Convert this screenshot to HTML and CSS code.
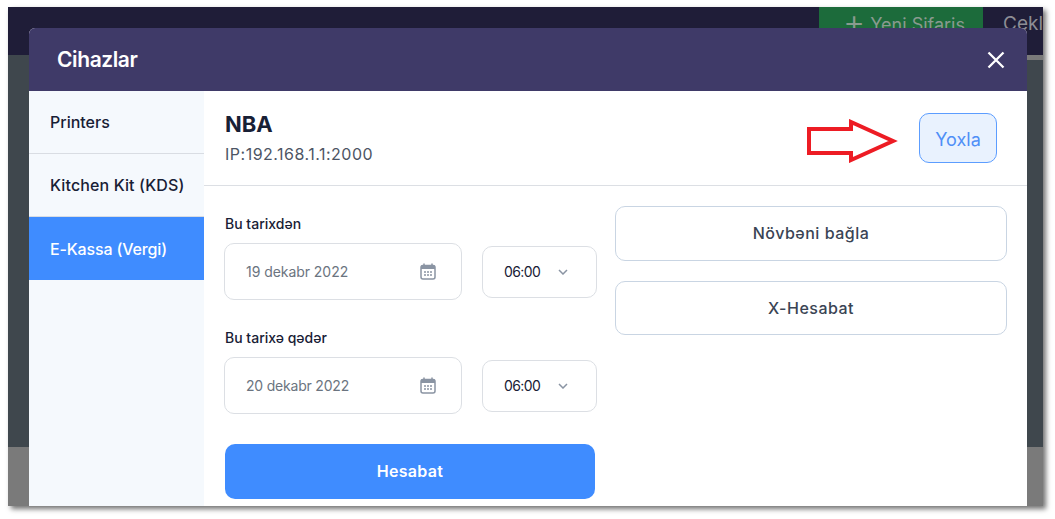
FILE: index.html
```html
<!DOCTYPE html>
<html lang="en">
<head>
    <meta charset="UTF-8">
    <title>Cihazlar</title>
    <link rel="stylesheet" href="styles.css">
</head>
<body>
    <div class="screen">
        <div class="topBar">
            <div class="newOrder"><span class="plus">+</span> Yeni Sifariş</div>
            <div class="pending">Çekla</div>
        </div>
        <div class="pageBody"></div>
        <div class="pageFoot"></div>
        <div class="pageStrip"></div>

        <div class="modal">
            <div class="modalHead">
                <h2>Cihazlar</h2>
                <svg class="closeIcon" width="20" height="20" viewBox="0 0 20 20">
                    <path d="M2.5 2.5L17.5 17.5M17.5 2.5L2.5 17.5" stroke="#fff" stroke-width="2.3" fill="none"/>
                </svg>
            </div>
            <div class="modalBody">
                <div class="sideMenu">
                    <div class="sideItem">Printers</div>
                    <div class="sideItem wideItem">Kitchen Kit (KDS)</div>
                    <div class="sideItem active">E-Kassa (Vergi)</div>
                </div>
                <div class="content">
                    <div class="deviceRow">
                        <div class="deviceInfo">
                            <div class="deviceName">NBA</div>
                            <div class="deviceIp">IP:192.168.1.1:2000</div>
                        </div>
                        <button class="checkBtn">Yoxla</button>
                    </div>
                    <div class="formArea">
                        <div class="dateCol">
                            <label class="fieldLabel">Bu tarixdən</label>
                            <div class="fieldRow">
                                <div class="dateInput">
                                    <span>19 dekabr 2022</span>
                                    <svg class="calIcon" width="16" height="17" viewBox="0 0 16 17">
                                        <path d="M4 .5v3M12 .5v3" stroke="#8a94a3" stroke-width="1.5"/>
                                        <rect x="1" y="2.5" width="14" height="13.5" rx="2" fill="none" stroke="#8a94a3" stroke-width="1.5"/>
                                        <rect x="1" y="2.5" width="14" height="3.5" fill="#8a94a3"/>
                                        <path d="M4 9h2M7 9h2M10 9h2M4 12h2M7 12h2M10 12h2" stroke="#8a94a3" stroke-width="1.4"/>
                                    </svg>
                                </div>
                                <div class="timeSelect">
                                    <span>06:00</span>
                                    <svg width="10" height="6" viewBox="0 0 10 6"><path d="M1 1l4 4 4-4" stroke="#8a94a3" stroke-width="1.5" fill="none"/></svg>
                                </div>
                            </div>
                            <label class="fieldLabel second">Bu tarixə qədər</label>
                            <div class="fieldRow">
                                <div class="dateInput">
                                    <span class="tightDate">20 dekabr 2022</span>
                                    <svg class="calIcon" width="16" height="17" viewBox="0 0 16 17">
                                        <path d="M4 .5v3M12 .5v3" stroke="#8a94a3" stroke-width="1.5"/>
                                        <rect x="1" y="2.5" width="14" height="13.5" rx="2" fill="none" stroke="#8a94a3" stroke-width="1.5"/>
                                        <rect x="1" y="2.5" width="14" height="3.5" fill="#8a94a3"/>
                                        <path d="M4 9h2M7 9h2M10 9h2M4 12h2M7 12h2M10 12h2" stroke="#8a94a3" stroke-width="1.4"/>
                                    </svg>
                                </div>
                                <div class="timeSelect">
                                    <span>06:00</span>
                                    <svg width="10" height="6" viewBox="0 0 10 6"><path d="M1 1l4 4 4-4" stroke="#8a94a3" stroke-width="1.5" fill="none"/></svg>
                                </div>
                            </div>
                            <button class="reportBtn">Hesabat</button>
                        </div>
                        <div class="actionCol">
                            <button class="actionBtn">Növbəni bağla</button>
                            <button class="actionBtn">X-Hesabat</button>
                        </div>
                    </div>
                </div>
            </div>
        </div>

        <!-- red arrow drawn over the screenshot -->
        <svg class="arrow" width="94" height="44" viewBox="0 0 94 44">
            <path d="M3 10H45V3L87 22L45 41V34H3Z" fill="#fff" stroke="#ed1c24" stroke-width="4"/>
        </svg>
    </div>
</body>
</html>
```

FILE: styles.css
```css
* {
    margin: 0;
    padding: 0;
    box-sizing: border-box;
    font-family: 'Inter', 'Noto Sans', sans-serif;
}

body {
    background-color: #fff;
    height: 519px;
    overflow: hidden;
}

.screen {
    position: relative;
    width: 1035px;
    height: 499px;
    margin: 7px 0 0 8px;
    display: flex;
    flex-direction: column;
    box-shadow: 3px 3px 5px rgba(0, 0, 0, 0.55);
}

.topBar {
    height: 48px;
    background-color: #1f1d38;
    display: flex;
    padding-left: 811px;
    overflow: hidden;
}

.newOrder {
    width: 164px;
    height: 48px;
    flex-shrink: 0;
    background-color: #1c6b3b;
    color: #8a9a90;
    font-size: 18px;
    padding: 5px 0 0 24px;
    white-space: nowrap;
}

.plus {
    font-size: 34px;
    font-weight: 300;
    line-height: 20px;
    vertical-align: -3px;
}

.pending {
    color: #8d8d95;
    font-size: 19px;
    padding: 5px 0 0 20px;
}

.pageBody {
    height: 392px;
    background-color: #3f474d;
}

.pageFoot {
    flex: 1;
    background-color: #7a7a7a;
}

.pageStrip {
    position: absolute;
    right: 0;
    top: 48px;
    width: 20px;
    height: 5px;
    background-color: #7a7a7a;
}

.modal {
    position: absolute;
    left: 21px;
    top: 21px;
    width: 998px;
    height: 478px;
    background-color: #fff;
    border-radius: 6px 6px 0 0;
    overflow: hidden;
    display: flex;
    flex-direction: column;
}

.modalHead {
    height: 63px;
    background-color: #3f3a68;
    color: #fff;
    display: flex;
    align-items: center;
    justify-content: space-between;
    padding: 0 21px 0 28px;
}

.modalHead h2 {
    font-size: 21px;
    font-weight: 600;
    letter-spacing: -0.4px;
}

.modalBody {
    flex: 1;
    display: flex;
}

.sideMenu {
    width: 175px;
    background-color: #f5f9fd;
}

.sideItem {
    height: 63px;
    line-height: 63px;
    padding-left: 21px;
    font-size: 16px;
    font-weight: 500;
    color: #182035;
    border-bottom: 1px solid #d9dde3;
    white-space: nowrap;
}

.wideItem {
    letter-spacing: 0.12px;
}

.sideItem.active {
    background-color: #3f8cff;
    color: #fff;
    border-bottom: none;
    line-height: 64px;
    letter-spacing: -0.15px;
}

.content {
    flex: 1;
}

.deviceRow {
    height: 95px;
    border-bottom: 1px solid #dcdfe4;
    display: flex;
    justify-content: space-between;
    align-items: center;
    padding: 0 30px 0 21px;
}

.deviceInfo {
    margin-top: 4px;
}

.deviceName {
    font-size: 22px;
    font-weight: 700;
    color: #182035;
    line-height: 28px;
    margin-top: -4px;
}

.deviceIp {
    font-size: 16px;
    color: #4d5564;
    line-height: 24px;
    margin-top: 4px;
    letter-spacing: 0.5px;
}

.checkBtn {
    width: 78px;
    height: 50px;
    padding-top: 2px;
    background-color: #e9f2fe;
    border: 1px solid #5c9dff;
    border-radius: 10px;
    color: #4f8ff7;
    font-size: 18px;
}

.formArea {
    display: flex;
    padding: 20px 20px 0 21px;
    gap: 18px;
}

.dateCol {
    width: 372px;
    padding-top: 9px;
}

.fieldLabel {
    display: block;
    font-size: 14px;
    font-weight: 500;
    color: #182035;
    line-height: 17px;
    margin-bottom: 11px;
}

.fieldLabel.second {
    margin-top: 29px;
}

.fieldRow {
    display: flex;
    align-items: center;
    justify-content: space-between;
    margin-left: -1px;
}

.dateInput {
    width: 238px;
    height: 57px;
    border: 1px solid #dcdfe4;
    border-radius: 10px;
    display: flex;
    align-items: center;
    justify-content: space-between;
    padding: 0 25px 0 21px;
    font-size: 14px;
    letter-spacing: -0.05px;
    color: #6b7480;
}

.tightDate {
    letter-spacing: -0.2px;
}

.timeSelect {
    width: 115px;
    height: 52px;
    border: 1px solid #dcdfe4;
    border-radius: 10px;
    display: flex;
    align-items: center;
    justify-content: space-between;
    padding: 0 28px 0 21px;
    font-size: 14px;
    letter-spacing: -0.6px;
    color: #182035;
}

.reportBtn {
    display: block;
    width: 370px;
    height: 55px;
    padding-bottom: 2px;
    margin-top: 30px;
    background-color: #3f8cff;
    border: none;
    border-radius: 10px;
    color: #fff;
    font-size: 16px;
    font-weight: 600;
    letter-spacing: 0.3px;
}

.actionCol {
    flex: 1;
    display: flex;
    flex-direction: column;
    gap: 20px;
}

.actionBtn {
    height: 54.5px;
    background-color: #fff;
    border: 1px solid #c9d5e3;
    border-radius: 10px;
    color: #3a4454;
    font-size: 16px;
    font-weight: 500;
    letter-spacing: 0.5px;
}

.arrow {
    position: absolute;
    left: 798px;
    top: 112px;
}
```
